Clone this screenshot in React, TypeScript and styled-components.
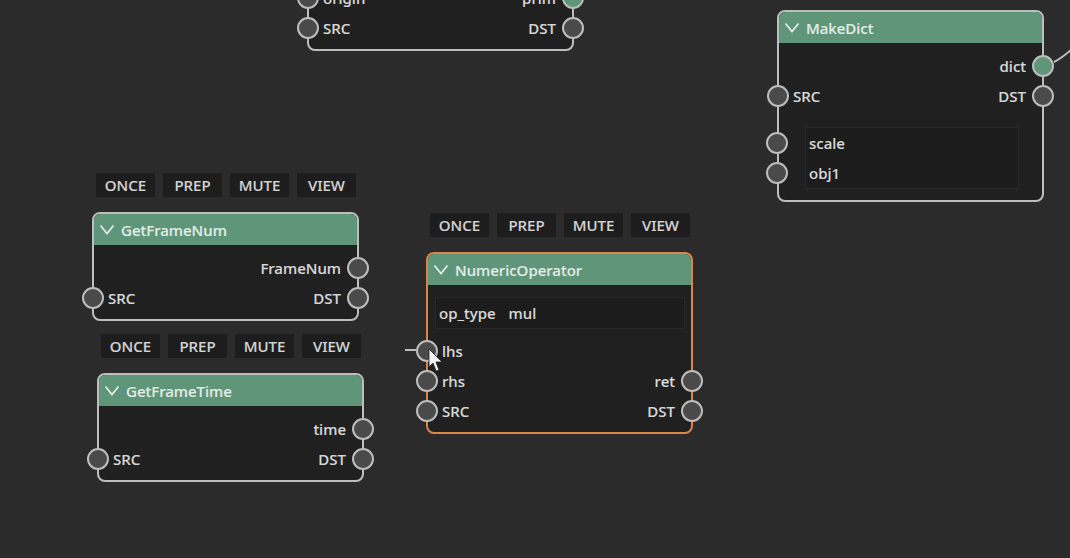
import { createGlobalStyle } from "styled-components";
import styled from "styled-components";

const GlobalStyle = createGlobalStyle`
  html, body {
    margin: 0;
    padding: 0;
    background: #2b2b2b;
    overflow: hidden;
  }
  * {
    box-sizing: border-box;
  }
`;

const Canvas = styled.main`
  position: relative;
  width: 1070px;
  height: 558px;
  overflow: hidden;
  background: #2b2b2b;
  font-family: "Noto Sans", "Open Sans", sans-serif;
  font-size: 15px;
  font-weight: 500;
  color: #d8d8d8;
  -webkit-text-stroke: 0.15px currentColor;
`;

const NodeWrap = styled.div<{ $x: number; $y: number }>`
  position: absolute;
  left: ${(p) => p.$x}px;
  top: ${(p) => p.$y}px;
  display: flex;
  flex-direction: column;
  gap: 15px;
  width: 267px;
`;

const Toolbar = styled.div`
  display: flex;
  gap: 8px;
  padding-left: 4px;
`;

const ToolButton = styled.div`
  width: 59px;
  height: 24px;
  display: flex;
  align-items: center;
  justify-content: center;
  background: #1d1d1d;
  color: #d4d4d4;
  font-size: 15px;
`;

const NodeFrame = styled.div<{ $active?: boolean }>`
  display: flex;
  flex-direction: column;
  border: 2px solid ${(p) => (p.$active ? "#dc8549" : "#bdbdbd")};
  border-radius: 8px;
  background: #202020;
  padding-bottom: 6px;
`;

const Header = styled.div`
  height: 31px;
  flex-shrink: 0;
  display: flex;
  align-items: center;
  gap: 6px;
  padding-left: 5px;
  background: #5f9579;
  border-radius: 6px 6px 0 0;
  color: #e2ece6;
  font-size: 15px;
  margin-bottom: 8px;
`;

const Row = styled.div`
  position: relative;
  height: 30px;
  display: flex;
  align-items: center;
  justify-content: space-between;
  padding: 0 16px 0 14px;
`;

const Socket = styled.span<{ $side: "left" | "right"; $on?: boolean }>`
  position: absolute;
  top: 4px;
  ${(p) => (p.$side === "left" ? "left: -12px;" : "right: -12px;")}
  width: 22px;
  height: 22px;
  border-radius: 50%;
  border: 2px solid #bdbdbd;
  background: ${(p) => (p.$on ? "#5f9579" : "#4a4a4a")};
`;

const ParamBox = styled.div<{ $inset: number; $right: number; $top: number }>`
  margin: ${(p) => p.$top}px ${(p) => p.$right}px 0 ${(p) => p.$inset}px;
  background: #1c1c1c;
  border: 1px solid #292929;
`;

const ParamRow = styled.div`
  position: relative;
  height: 30px;
  display: flex;
  align-items: center;
  gap: 13px;
  padding-left: 3px;
`;

const ParamSocket = styled.span<{ $offset: number }>`
  position: absolute;
  top: 4px;
  left: ${(p) => p.$offset}px;
  width: 22px;
  height: 22px;
  border-radius: 50%;
  border: 2px solid #bdbdbd;
  background: #4a4a4a;
`;

const Gap = styled.div<{ $h: number }>`
  height: ${(p) => p.$h}px;
  flex-shrink: 0;
`;

const Overlay = styled.svg`
  position: absolute;
  left: 0;
  top: 0;
  pointer-events: none;
`;

type Port = { left?: string; right?: string; leftOn?: boolean; rightOn?: boolean };

const Chevron = () => (
  <svg width="16" height="11" viewBox="0 0 16 11">
    <polyline points="1.5,1.5 8,9.5 14.5,1.5" fill="none" stroke="#e2ece6" strokeWidth="1.8" />
  </svg>
);

const Ports = ({ ports }: { ports: Port[] }) => (
  <>
    {ports.map((p, i) => (
      <Row key={i}>
        {p.left !== undefined && <Socket $side="left" $on={p.leftOn} />}
        <span>{p.left ?? ""}</span>
        <span>{p.right ?? ""}</span>
        {p.right !== undefined && <Socket $side="right" $on={p.rightOn} />}
      </Row>
    ))}
  </>
);

const Buttons = () => (
  <Toolbar>
    {["ONCE", "PREP", "MUTE", "VIEW"].map((b) => (
      <ToolButton key={b}>{b}</ToolButton>
    ))}
  </Toolbar>
);

const App = () => {
  return (
    <Canvas>
      <GlobalStyle />

      <NodeWrap $x={307} $y={-58}>
        <NodeFrame>
          <Header>
            <Chevron />
            PrimitiveCreate
          </Header>
          <Ports
            ports={[
              { left: "origin", right: "prim", rightOn: true },
              { left: "SRC", right: "DST" },
            ]}
          />
        </NodeFrame>
      </NodeWrap>

      <NodeWrap $x={777} $y={10}>
        <NodeFrame>
          <Header>
            <Chevron />
            MakeDict
          </Header>
          <Ports
            ports={[
              { right: "dict", rightOn: true },
              { left: "SRC", right: "DST" },
            ]}
          />
          <ParamBox $inset={26} $right={23} $top={16}>
            <ParamRow>
              <ParamSocket $offset={-40} />
              <span>scale</span>
            </ParamRow>
            <ParamRow>
              <ParamSocket $offset={-40} />
              <span>obj1</span>
            </ParamRow>
          </ParamBox>
          <Gap $h={5} />
        </NodeFrame>
      </NodeWrap>

      <NodeWrap $x={92} $y={173}>
        <Buttons />
        <NodeFrame>
          <Header>
            <Chevron />
            GetFrameNum
          </Header>
          <Ports
            ports={[
              { right: "FrameNum" },
              { left: "SRC", right: "DST" },
            ]}
          />
        </NodeFrame>
      </NodeWrap>

      <NodeWrap $x={97} $y={334}>
        <Buttons />
        <NodeFrame>
          <Header>
            <Chevron />
            GetFrameTime
          </Header>
          <Ports
            ports={[
              { right: "time" },
              { left: "SRC", right: "DST" },
            ]}
          />
        </NodeFrame>
      </NodeWrap>

      <NodeWrap $x={426} $y={213}>
        <Buttons />
        <NodeFrame $active>
          <Header>
            <Chevron />
            NumericOperator
          </Header>
          <ParamBox $inset={7} $right={6} $top={4}>
            <ParamRow>
              <span>op_type</span>
              <span>mul</span>
            </ParamRow>
          </ParamBox>
          <Gap $h={7} />
          <Ports
            ports={[
              { left: "lhs" },
              { left: "rhs", right: "ret" },
              { left: "SRC", right: "DST" },
            ]}
          />
        </NodeFrame>
      </NodeWrap>

      <Overlay width="1070" height="558">
        <path d="M1054 62 Q1062 58 1072 49" fill="none" stroke="#bdbdbd" strokeWidth="2" />
        <line x1="405" y1="350" x2="416" y2="350" stroke="#bdbdbd" strokeWidth="2" />
        <path
          d="M429 349 L429 367 L433 363 L436 371 L439 370 L436 362 L442 362 Z"
          fill="#f2f2f2"
          stroke="#222"
          strokeWidth="0.8"
        />
      </Overlay>
    </Canvas>
  );
};

export default App;
